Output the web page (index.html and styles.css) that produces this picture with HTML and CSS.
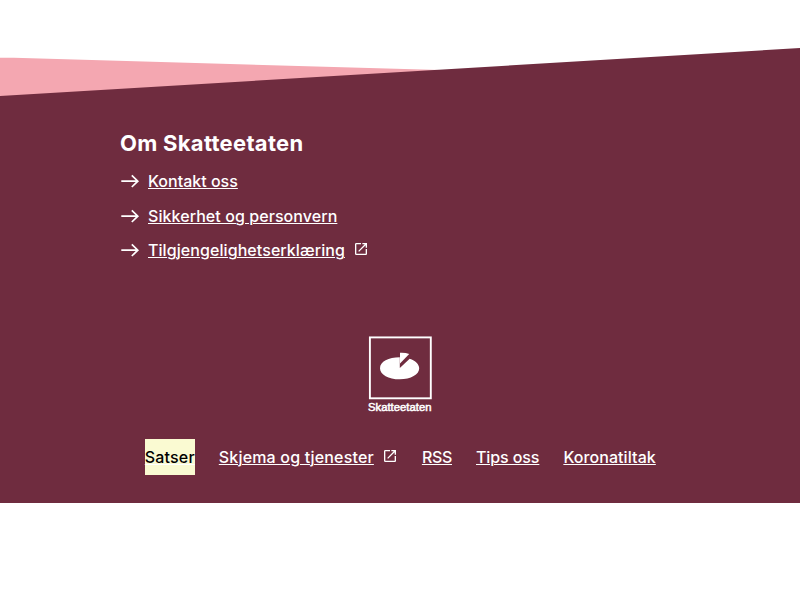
FILE: index.html
```html
<!DOCTYPE html>
<html lang="no">
<head>
<meta charset="utf-8">
<title>Skatteetaten</title>
<link rel="stylesheet" href="styles.css">
</head>
<body>
<svg class="symbols" aria-hidden="true">
  <symbol id="arrow" viewBox="0 0 20 20"><path d="M1.3 10.200H18M11.800 4.400 17.800 10.200 11.800 16" fill="none" stroke="currentColor" stroke-width="1.700"/></symbol>
  <symbol id="external" viewBox="0 0 24 24"><path fill="currentColor" d="M19 19H5V5h7V3H5a2 2 0 0 0-2 2v14a2 2 0 0 0 2 2h14c1.100 0 2-.9 2-2v-7h-2v7zM14 3v2h3.590l-9.830 9.830 1.410 1.410L19 6.410V10h2V3h-7z"/></symbol>
</svg>
<footer class="footer">
  <svg class="slant" viewBox="0 0 800 48" aria-hidden="true">
    <path class="slant-pink" d="M0 9.700H14L440 22V48H0z"/>
    <path class="slant-dark" d="M0 48 800 0V48z"/>
  </svg>
  <div class="content">
    <section class="about">
      <h2>Om Skatteetaten</h2>
      <ul class="links">
        <li><svg class="arrow"><use href="#arrow"/></svg><a href="#">Kontakt oss</a></li>
        <li><svg class="arrow"><use href="#arrow"/></svg><a class="loose" href="#">Sikkerhet og personvern</a></li>
        <li><svg class="arrow"><use href="#arrow"/></svg><a class="loose" href="#">Tilgjengelighetserklæring</a><svg class="external"><use href="#external"/></svg></li>
      </ul>
    </section>
    <svg class="logo" viewBox="0 0 66 78" role="img" aria-label="Skatteetaten">
      <rect x="2.900" y="1.400" width="60.900" height="60.900" fill="none" stroke="#fff" stroke-width="1.900"/>
      <path fill="#fff" d="M32.800 21.300C21.500 21.300 13 25.700 13 32.200S21.500 43.300 32.700 43.300 52.200 38.600 52.200 32.300C52.200 28.300 48.500 24.700 42.700 22.700L32.800 32z"/>
      <path fill="#fff" d="M33 16.800C36.500 16.600 39.500 17 42.200 17.900L33 27.400z"/>
      <text x="1" y="74.800" textLength="63.500" lengthAdjust="spacingAndGlyphs">Skatteetaten</text>
    </svg>
    <nav class="bottom">
      <a class="focused looser" href="#">Satser</a>
      <span class="item"><a class="looser" href="#">Skjema og tjenester</a><svg class="external"><use href="#external"/></svg></span>
      <a class="tight" href="#">RSS</a>
      <a class="snug" href="#">Tips oss</a>
      <a class="loose" href="#">Koronatiltak</a>
    </nav>
  </div>
</footer>
</body>
</html>
```
FILE: styles.css
```css
body {
  margin: 0;
  background: #fff;
  font-family: Inter, sans-serif;
  font-size: 16px;
  font-weight: 500;
  line-height: 24px;
}
.symbols { display: none; }
.footer { padding-top: 48px; }
.slant { display: block; width: 100%; height: 48px; }
.slant-pink { fill: #f4a7b1; }
.slant-dark { fill: #6f2c3f; }
.content {
  box-sizing: border-box;
  height: 407px;
  padding-top: 31px;
  background: #6f2c3f;
  color: #fff;
}
.about { height: 209px; padding-left: 120px; }
h2 {
  margin: 0;
  font-size: 22px;
  line-height: 32px;
  font-weight: 700;
  letter-spacing: 0.29px;
}
.links {
  display: flex;
  flex-direction: column;
  gap: 10.500px;
  margin: 10px 0 0;
  padding: 0;
  list-style: none;
}
.links li { display: flex; align-items: center; }
a {
  color: inherit;
  text-decoration: underline;
  text-decoration-thickness: 1px;
  text-underline-offset: 1px;
}
.loose { letter-spacing: 0.07px; }
.looser { letter-spacing: 0.18px; }
.snug { letter-spacing: -0.1px; }
.tight { letter-spacing: -0.3px; }
.arrow { width: 20px; height: 20px; margin-right: 8px; }
.external { width: 16px; height: 16px; margin: 0 0 3px 8px; }
.logo { display: block; width: 66px; height: 78px; margin: 0 auto; }
.logo text {
  fill: #fff;
  stroke: #fff;
  stroke-width: 0.5px;
  font: 11px "Liberation Sans", sans-serif;
}
.bottom {
  display: flex;
  justify-content: center;
  gap: 24px;
  margin-top: 25px;
  padding-left: 0.6px;
  line-height: 36px;
}
.item { display: flex; align-items: center; }
.focused {
  background: #fafad2;
  color: #000;
  text-decoration-color: #fff;
}
```
